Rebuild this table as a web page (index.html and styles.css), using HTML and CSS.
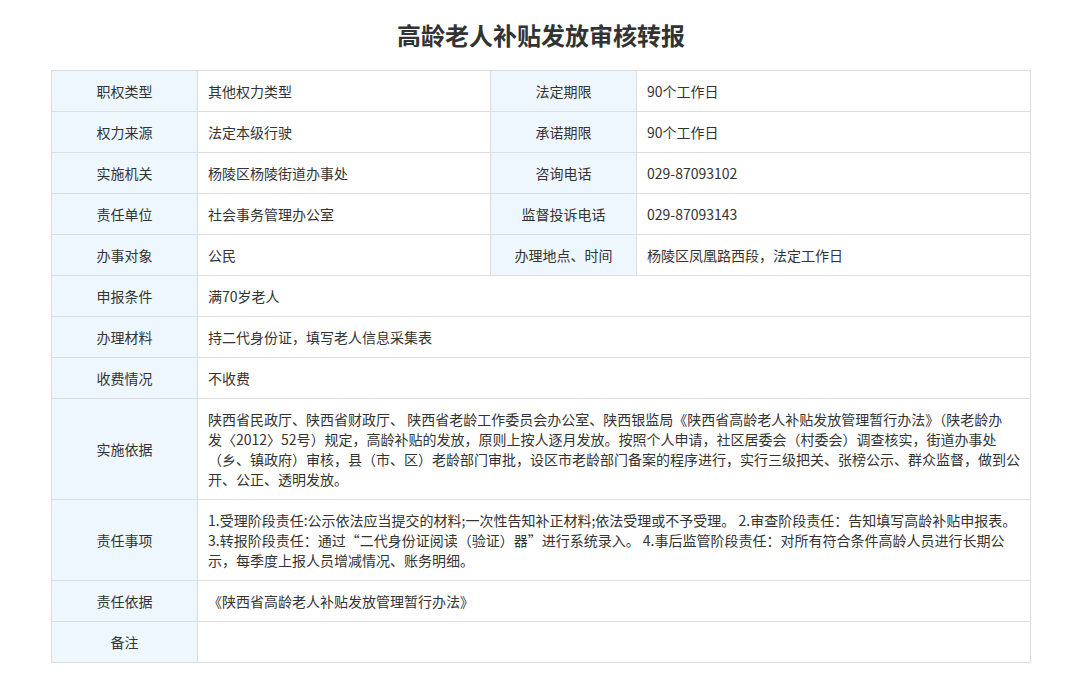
FILE: index.html
```html
<!DOCTYPE html>
<html lang="zh-CN">
<head>
<meta charset="utf-8">
<title>高龄老人补贴发放审核转报</title>
<link rel="stylesheet" href="styles.css">
</head>
<body>
<div class="page">
  <h1 class="title">高龄老人补贴发放审核转报</h1>
  <table class="info">
    <colgroup>
      <col class="c-label">
      <col class="c-value">
      <col class="c-label">
      <col class="c-value2">
    </colgroup>
    <tbody>
      <tr>
        <th>职权类型</th><td>其他权力类型</td>
        <th>法定期限</th><td>90个工作日</td>
      </tr>
      <tr>
        <th>权力来源</th><td>法定本级行驶</td>
        <th>承诺期限</th><td>90个工作日</td>
      </tr>
      <tr>
        <th>实施机关</th><td>杨陵区杨陵街道办事处</td>
        <th>咨询电话</th><td>029-87093102</td>
      </tr>
      <tr>
        <th>责任单位</th><td>社会事务管理办公室</td>
        <th>监督投诉电话</th><td>029-87093143</td>
      </tr>
      <tr>
        <th>办事对象</th><td>公民</td>
        <th>办理地点、时间</th><td>杨陵区凤凰路西段，法定工作日</td>
      </tr>
      <tr>
        <th>申报条件</th><td colspan="3">满70岁老人</td>
      </tr>
      <tr>
        <th>办理材料</th><td colspan="3">持二代身份证，填写老人信息采集表</td>
      </tr>
      <tr>
        <th>收费情况</th><td colspan="3">不收费</td>
      </tr>
      <tr>
        <th>实施依据</th><td colspan="3">陕西省民政厅、陕西省财政厅、 陕西省老龄工作委员会办公室、陕西银监局《陕西省高龄老人补贴发放管理暂行办法》（陕老龄办<span class="nobr">发〈2012〉52号</span>）规定，高龄补贴的发放，原则上按人逐月发放。按照个人申请，社区居委会（村委会）调查核实，街道办事处（乡、镇政府）审核，县（市、区）老龄部门审批，设区市老龄部门备案的程序进行，实行三级把关、张榜公示、群众监督，做到公开、公正、透明发放。</td>
      </tr>
      <tr>
        <th>责任事项</th><td colspan="3">1.受理阶段责任:公示依法应当提交的材料;一次性告知补正材料;依法受理或不予受理。 2.审查阶段责任：告知填写高龄补贴申报表。3.转报阶段责任：通过“二代身份证阅读（验证）器”进行系统录入。 4.事后监管阶段责任：对所有符合条件高龄人员进行长期公示，每季度上报人员增减情况、账务明细。</td>
      </tr>
      <tr>
        <th>责任依据</th><td colspan="3">《陕西省高龄老人补贴发放管理暂行办法》</td>
      </tr>
      <tr>
        <th>备注</th><td colspan="3"></td>
      </tr>
    </tbody>
  </table>
</div>
</body>
</html>
```
FILE: styles.css
```css
html, body {
  margin: 0;
  padding: 0;
  background: #ffffff;
}
body {
  font-family: "Noto Sans CJK SC", "Noto Sans", sans-serif;
  color: #333333;
  font-size: 14px;
}
.page {
  width: 980px;
  margin-left: 51px;
  padding-top: 20px;
}
.title {
  margin: 0 0 20px 0;
  font-size: 24px;
  line-height: 30px;
  font-weight: bold;
  text-align: center;
  color: #333333;
}
.info {
  width: 980px;
  table-layout: fixed;
  border-collapse: collapse;
}
.c-label { width: 146px; }
.c-value { width: 293px; }
.c-value2 { width: 394px; }
.info th,
.info td {
  border: 1px solid #dddddd;
  padding: 10px 10px;
  line-height: 20px;
  font-size: 14px;
  vertical-align: middle;
  word-break: break-all;
}
.info th {
  background: #eef7fd;
  font-weight: normal;
  text-align: center;
  color: #333333;
}
.info td {
  text-align: left;
  color: #333333;
}
.nobr {
  white-space: nowrap;
}
```
